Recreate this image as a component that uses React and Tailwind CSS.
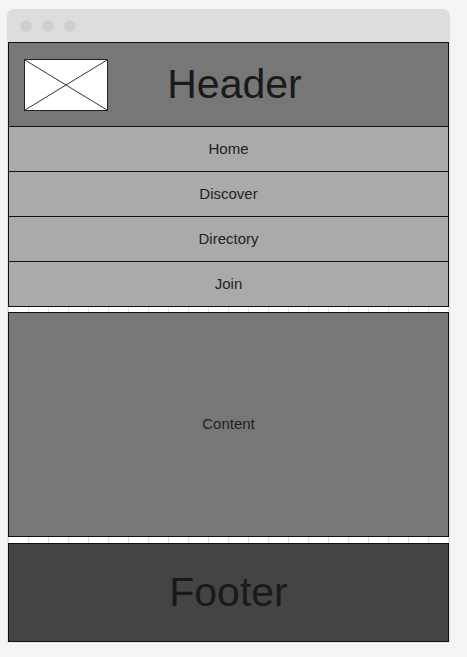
export default function App() {
  const font = { fontFamily: '"Liberation Sans", Arial, sans-serif' };
  const navItems = ["Home", "Discover", "Directory", "Join"];
  return (
    <div className="min-h-[657px] w-[467px] bg-[#f4f4f4] pt-[9px] pl-[7px]" style={font}>
      <div className="w-[443px]">
        <div className="h-[33px] rounded-t-[7px] bg-[#dddddd] flex items-center gap-[10px] pl-[13px]">
          <span className="w-[12px] h-[12px] rounded-full bg-[#cfcfcf]" />
          <span className="w-[12px] h-[12px] rounded-full bg-[#cfcfcf]" />
          <span className="w-[12px] h-[12px] rounded-full bg-[#cfcfcf]" />
        </div>
        <div className="border-x border-b border-[#e4e4e4] bg-white bg-[linear-gradient(to_right,#e2e2e2_1px,transparent_1px)] bg-[size:20px_20px]">
          <div className="border border-[#111]">
            <div className="h-[84px] bg-[#777777] flex items-center border-b border-[#111]">
              <div className="ml-[15px] w-[84px] h-[52px] bg-white border border-[#222] shrink-0">
                <svg width="82" height="50" viewBox="0 0 82 50" className="block">
                  <line x1="0" y1="0" x2="82" y2="50" stroke="#333" strokeWidth="1" />
                  <line x1="82" y1="0" x2="0" y2="50" stroke="#333" strokeWidth="1" />
                </svg>
              </div>
              <div className="flex-1 mr-[87px] text-center text-[41px] leading-none text-[#1a1a1a]">Header</div>
            </div>
            {navItems.map((item, i) => (
              <div
                key={item}
                className={
                  i < navItems.length - 1
                    ? "h-[45px] bg-[#aaaaaa] border-b border-[#111] flex items-center justify-center text-[15px] text-[#222]"
                    : "h-[44px] bg-[#aaaaaa] flex items-center justify-center text-[15px] text-[#222]"
                }
              >
                {item}
              </div>
            ))}
          </div>
          <div className="mt-[5px] h-[225px] border border-[#111] bg-[#777777] flex items-center justify-center text-[15px] text-[#222]">
            Content
          </div>
          <div className="mt-[6px] h-[99px] border border-[#111] bg-[#444444] flex items-center justify-center text-[41px] leading-none text-[#1a1a1a]">
            Footer
          </div>
        </div>
      </div>
    </div>
  );
}
